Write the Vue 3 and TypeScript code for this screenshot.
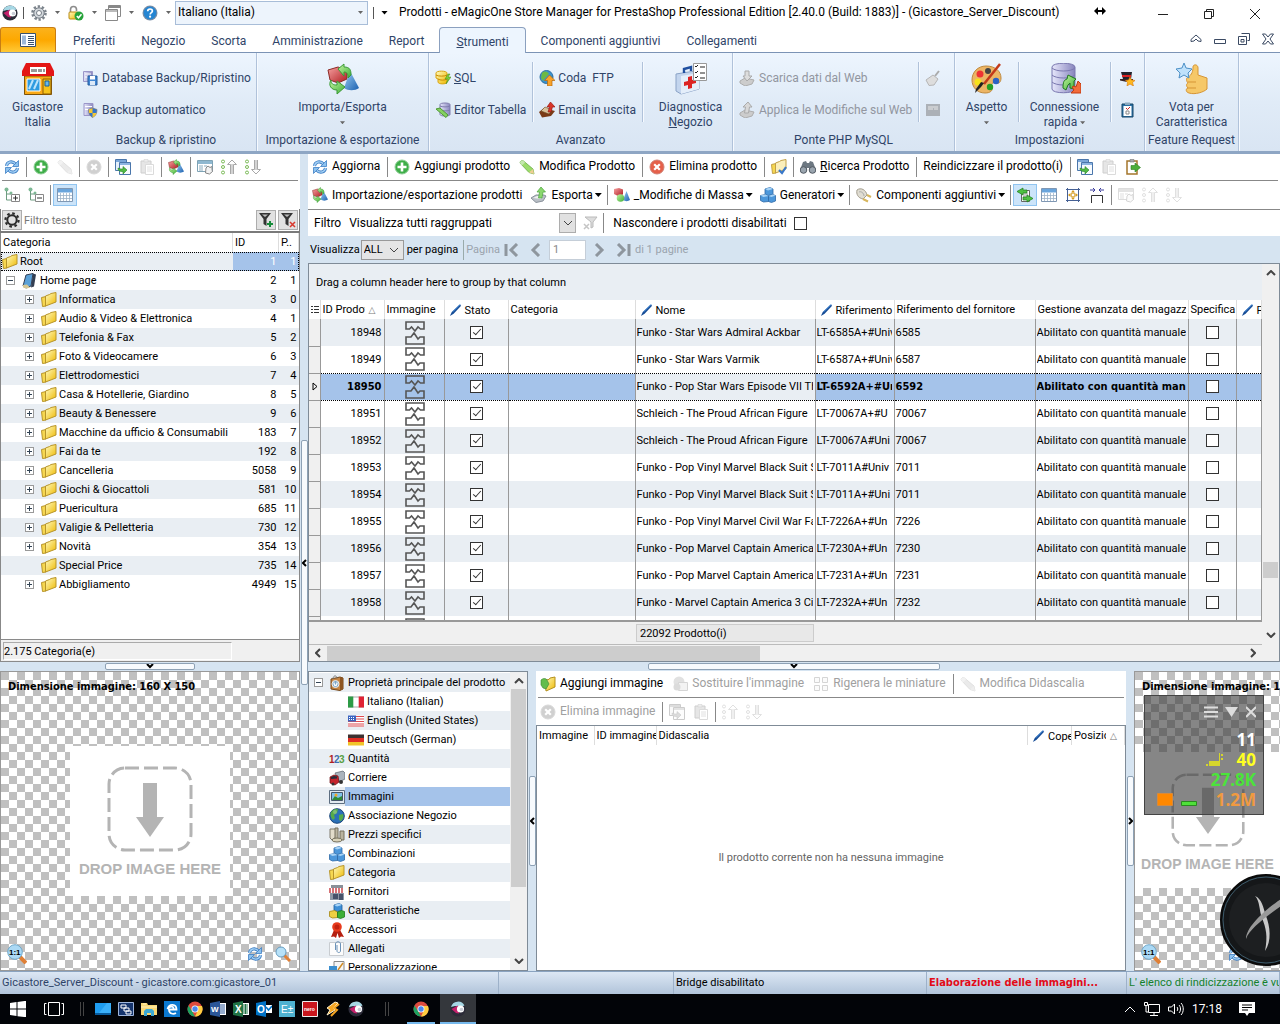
<script setup lang="ts">
import { h, ref } from 'vue'
import type { FunctionalComponent } from 'vue'

type Glyph = [text: string, x: number, y: number, size: number, fill: string, weight: number]
const glyphs: Record<string, Glyph[]> = {
  n123: [['1', 0, 12, 10, '#b01e1e', 700], ['2', 5, 12, 10, '#3f6fae', 700], ['3', 10, 12, 10, '#57a043', 700]],
  mag1: [['1:1', 2, 11, 8, '#000', 700]],
  word: [['W', 1, 11, 8, '#fff', 700]],
  excel: [['X', 2, 12, 10, '#fff', 700]],
  outlook: [['O', 1, 12, 10, '#fff', 700]],
  epm: [['E±', 2, 12, 10, '#fff', 400]],
  nero: [['nero', 2, 10, 5, '#fff', 700]],
}

const Ico: FunctionalComponent<{ n: string; s?: number }> = (p) =>
  h('svg', { class: 'ico', width: p.s ?? 16, height: p.s ?? 16, 'aria-hidden': 'true' }, [
    h('use', { href: '#' + p.n }),
    ...(glyphs[p.n] ?? []).map((g) => h('text', { x: g[1], y: g[2], 'font-size': g[3], fill: g[4], 'font-weight': g[5], 'font-family': 'Liberation Sans, sans-serif' }, g[0])),
  ])
Ico.props = ['n', 's']

interface Tool { icon?: string; text?: string; sep?: boolean; off?: boolean; drop?: boolean; on?: boolean; acc?: boolean }
const sep: Tool = { sep: true }

const tabs = ['Preferiti', 'Negozio', 'Scorta', 'Amministrazione', 'Report', 'Strumenti', 'Componenti aggiuntivi', 'Collegamenti']

const treeTools: Tool[] = [
  { icon: 'refresh' }, sep, { icon: 'add' }, { icon: 'pencil', off: true }, sep, { icon: 'del', off: true }, sep,
  { icon: 'copy' }, { icon: 'paste', off: true }, sep, { icon: 'impexp' }, sep, { icon: 'tconf' }, { icon: 'sup' }, { icon: 'sdown' },
]
const treeTools2: Tool[] = [{ icon: 'tplus' }, { icon: 'tminus' }, sep, { icon: 'tgrid', on: true }]
const prodTools: Tool[] = [
  { icon: 'refresh', text: 'Aggiorna' }, sep, { icon: 'add', text: 'Aggiungi prodotto' }, { icon: 'pencil', text: 'Modifica Prodotto' }, sep,
  { icon: 'del', text: 'Elimina prodotto' }, sep, { icon: 'fcheck' }, sep, { icon: 'binoc', text: 'Ricerca Prodotto', acc: true }, sep,
  { text: 'Reindicizzare il prodotto(i)' }, sep, { icon: 'copy' }, { icon: 'paste', off: true }, { icon: 'pexp' },
]
const prodTools2: Tool[] = [
  { icon: 'impexp', text: 'Importazione/esportazione prodotti' }, { icon: 'exp', text: 'Esporta', drop: true }, sep,
  { icon: 'mass', text: '_Modifiche di Massa', drop: true }, { icon: 'cubes', text: 'Generatori', drop: true }, sep,
  { icon: 'plug', text: 'Componenti aggiuntivi', drop: true }, sep, { icon: 'dswap', on: true }, { icon: 'tgrid' }, { icon: 'fit' }, { icon: 'widths' }, sep,
  { icon: 'tconf', off: true }, { icon: 'sup', off: true }, { icon: 'sdown', off: true },
]
const imgTools: Tool[] = [
  { icon: 'addimg', text: 'Aggiungi immagine' }, { icon: 'replace', text: "Sostituire l'immagine", off: true },
  { icon: 'thumbs', text: 'Rigenera le miniature', off: true }, sep, { icon: 'pencil', text: 'Modifica Didascalia', off: true },
]
const imgTools2: Tool[] = [
  { icon: 'del', text: 'Elimina immagine', off: true }, sep, { icon: 'copy', off: true }, { icon: 'paste', off: true }, sep,
  { icon: 'sup', off: true }, { icon: 'sdown', off: true },
]

const cats: [string, string, string][] = [
  ['Informatica', '3', '0'], ['Audio & Video & Elettronica', '4', '1'], ['Telefonia & Fax', '5', '2'], ['Foto & Videocamere', '6', '3'],
  ['Elettrodomestici', '7', '4'], ['Casa & Hotellerie, Giardino', '8', '5'], ['Beauty & Benessere', '9', '6'],
  ['Macchine da ufficio & Consumabili', '183', '7'], ['Fai da te', '192', '8'], ['Cancelleria', '5058', '9'], ['Giochi & Giocattoli', '581', '10'],
  ['Puericultura', '685', '11'], ['Valigie & Pelletteria', '730', '12'], ['Novità', '354', '13'], ['Special Price', '735', '14'], ['Abbigliamento', '4949', '15'],
]

const rows: [string, string, string, string][] = [
  ['18948', 'Funko - Star Wars Admiral Ackbar', 'LT-6585A+#Univ', '6585'],
  ['18949', 'Funko - Star Wars Varmik', 'LT-6587A+#Univ', '6587'],
  ['18950', 'Funko - Pop Star Wars Episode VII The', 'LT-6592A+#Univ', '6592'],
  ['18951', 'Schleich - The Proud African Figure', 'LT-70067A+#U', '70067'],
  ['18952', 'Schleich - The Proud African Figure', 'LT-70067A#Uni', '70067'],
  ['18953', 'Funko - Pop Vinyl Marvel Black Suit Sp', 'LT-7011A#Univ', '7011'],
  ['18954', 'Funko - Pop Vinyl Marvel Black Suit Sp', 'LT-7011A+#Uni', '7011'],
  ['18955', 'Funko - Pop Vinyl Marvel Civil War Fal', 'LT-7226A+#Un', '7226'],
  ['18956', 'Funko - Pop Marvel Captain America', 'LT-7230A+#Un', '7230'],
  ['18957', 'Funko - Pop Marvel Captain America', 'LT-7231A+#Un', '7231'],
  ['18958', 'Funko - Marvel Captain America 3 Civil', 'LT-7232A+#Un', '7232'],
  ['', '', '', ''],
]
const current = ref('18950')

const props: [string, string, number][] = [
  ['bag', 'Proprietà principale del prodotto', 0], ['it', 'Italiano (Italian)', 1], ['us', 'English (United States)', 1], ['de', 'Deutsch (German)', 1],
  ['n123', 'Quantità', 0], ['truck', 'Corriere', 0], ['pic', 'Immagini', 0], ['globe', 'Associazione Negozio', 0], ['coins', 'Prezzi specifici', 0],
  ['cubes', 'Combinazioni', 0], ['folder', 'Categoria', 0], ['front', 'Fornitori', 0], ['cubes3', 'Caratteristiche', 0], ['rosette', 'Accessori', 0],
  ['clip', 'Allegati', 0], ['custom', 'Personalizzazione', 0],
]
const selected = ref('Immagini')

const pinned = ['desk', 'remote', 'explorer', 'edge', 'chrome', 'word', 'excel', 'outlook', 'epm', 'nero', 'winamp', 'logo']
const status = ['Gicastore_Server_Discount - gicastore.com:gicastore_01', '', 'Bridge disabilitato', 'Elaborazione delle immagini...', "L' elenco di rindicizzazione è vuoto"]
</script>

<template>
  <div class="app">
    <svg class="sprite" aria-hidden="true">
      <defs>
        <linearGradient id="gy" x1="0" y1="0" x2="1" y2="1"><stop offset="0" stop-color="#fffbc0" /><stop offset="1" stop-color="#eeb800" /></linearGradient>
        <linearGradient id="gb" x1="0" y1="0" x2="1" y2="1"><stop offset="0" stop-color="#9fd0f5" /><stop offset="1" stop-color="#1c61b0" /></linearGradient>
        <linearGradient id="gg" x1="0" y1="0" x2="1" y2="1"><stop offset="0" stop-color="#c5f5a2" /><stop offset="1" stop-color="#3cae35" /></linearGradient>
        <linearGradient id="gr" x1="0" y1="0" x2="1" y2="1"><stop offset="0" stop-color="#f5a0a0" /><stop offset="1" stop-color="#b01c20" /></linearGradient>
        <linearGradient id="gv" x1="0" y1="0" x2="1" y2="0"><stop offset="0" stop-color="#e6e6fb" /><stop offset="1" stop-color="#8785bd" /></linearGradient>
      </defs>
      <symbol id="logo" viewBox="0 0 16 16"><circle cx="8" cy="8" r="7.600" fill="#2b2b38" /><path d="M1 6a7.300 7.300 0 0 1 13.500-1.500L10 6 5 5z" fill="#a6d7e4" /><path d="M1.500 8 8 4.500 9 12.500 6 12z" fill="#c5216c" /><circle cx="10.500" cy="8" r="3.600" fill="#fff" /><circle cx="11.500" cy="8.500" r="1.800" fill="#c9ccd6" /></symbol>
      <symbol id="gear" viewBox="0 0 16 16"><circle cx="8" cy="8" r="6.500" fill="none" stroke="#7c848c" stroke-width="2.600" stroke-dasharray="2.300 1.780" /><circle cx="8" cy="8" r="5.200" fill="#d3d8dc" stroke="#767e87" /><circle cx="8" cy="8" r="2.500" fill="#fff" stroke="#767e87" /></symbol>
      <symbol id="lock" viewBox="0 0 16 16"><path d="M2.500 8V4.500a3 3 0 0 1 6 0V6" fill="none" stroke="#8c8c8c" stroke-width="1.600" /><rect x="1" y="7" width="9" height="7" rx="1" fill="url(#gy)" stroke="#b98a14" /><circle cx="11" cy="11" r="4.500" fill="#26a33a" /><path d="m8.800 11 1.700 1.800 3-3.500" fill="none" stroke="#fff" stroke-width="1.500" /></symbol>
      <symbol id="win" viewBox="0 0 16 16"><path d="M3.500.500h12v11h-12z" fill="#fff" stroke="#888" /><path d="M3 1h12v2H3z" fill="#888" /><path d="M.500 4.500h12v11H.500z" fill="#fff" stroke="#888" /><path d="M1 5h11v2H1z" fill="#bbb" /></symbol>
      <symbol id="help" viewBox="0 0 16 16"><circle cx="8" cy="8" r="7.500" fill="#7c8ea4" /><circle cx="8" cy="8" r="6.400" fill="#2585d2" /><path d="M5.700 6.300c0-3 4.700-3 4.700-.300 0 1.700-2.200 1.700-2.200 3.500" fill="none" stroke="#fff" stroke-width="1.700" /><circle cx="8.100" cy="11.700" r="1.100" fill="#fff" /></symbol>
      <symbol id="shop" viewBox="0 0 32 32"><path d="M2.500 13h27v18.500h-27z" fill="#f9a916" stroke="#7d5309" /><path d="M4 0h24l4 8v5H0V8z" fill="#e31616" /><path d="M8 4h16v7H8z" fill="#fff" /><path d="M10 6v3M12 6v3M14 6v3M17 6v3M19 6v3M22 6v3" stroke="#333" /><path d="M5 16h13v12H5z" fill="#2d9be0" stroke="#fff" /><path d="m7 26 4-9M12 26l4-9" stroke="#bde4fb" stroke-width="2" /><path d="M21 16h8v15h-8z" fill="#f6c31b" stroke="#8d5d06" /><path d="M23 18h4v5h-4z" fill="#68b9ec" stroke="#1b5f96" /></symbol>
      <symbol id="dbsave" viewBox="0 0 16 16"><path d="M1.500 1.500h9v10h-9z" fill="url(#gv)" stroke="#9a96c8" /><path d="M3 4h6M3 7h6" stroke="#fff" /><path d="M6 6h9v9H6z" fill="#3f86d3" stroke="#245c9f" /><path d="M8 6h5v3.500H8z" fill="#fff" /><path d="M8 11h5v4H8z" fill="#dce9f8" /></symbol>
      <symbol id="dbshield" viewBox="0 0 16 16"><path d="M2 1.500h9v12H2z" fill="url(#gv)" stroke="#9a96c8" /><path d="M3 4.500h7M3 7.500h7" stroke="#fff" /><path d="M10.500 6 15 7.500c0 4-1.500 6.500-4.500 8C8 14 6.500 11.500 6.500 7.500z" fill="#3377cf" stroke="#777" stroke-width=".7" /><path d="M10.500 11h4c-.8 2-2 3.500-4 4.500zM6.800 7.500l3.700-1.200V11H7.100z" fill="#f5c831" /></symbol>
      <symbol id="impexp" viewBox="0 0 32 32"><path d="m1 7 10-3 9 3v9L11 20 3 17z" fill="url(#gr)" stroke="#8c2b27" /><path d="m23 8 9 17c-4 3-11 3-15 0z" fill="url(#gb)" /><path d="M11 6 17 1v3c6 0 7 3 7 8l-3 3c0-4-1-6-4-6v4z" fill="url(#gg)" stroke="#3b9a36" /><path d="M4 17c0 4 2 5 6 5v-4l8 6-8 7v-4C4 27 1 22 4 17z" fill="url(#gg)" stroke="#3b9a36" /></symbol>
      <symbol id="sql" viewBox="0 0 16 16"><path d="M1 3c0-2.500 11-2.500 11 0v9c0 2.500-9 2.500-9 0V9L1 8z" fill="url(#gy)" stroke="#d9a410" /><path d="M1 5c2 1.500 9 1.500 11 0M3 9c2 1.500 7 1.500 9 0" fill="none" stroke="#c98a00" /><path d="m13 4-3 5h3l-2 5 5-7h-3l2-3z" fill="#7fcf3a" stroke="#3f8617" stroke-width=".5" /></symbol>
      <symbol id="tabedit" viewBox="0 0 16 16"><path d="M5 2.500c0-2 10-2 10 0v10c0 2-10 2-10 0z" fill="url(#gv)" stroke="#7f7cac" /><path d="M5 4c2 1.200 8 1.200 10 0M5 8c2 1.200 8 1.200 10 0" stroke="#7f7cac" fill="none" /><path d="m1 7 4-1 8 7-2 2.500z" fill="#85d162" stroke="#4f9a33" /></symbol>
      <symbol id="ftp" viewBox="0 0 16 16"><circle cx="7.500" cy="7" r="6.500" fill="#3b93d0" stroke="#2a6ea0" /><path d="M3 3c3-3 6-1 7 1L7 7 4 11 2 8z" fill="#6cb944" /><path d="M10.500 5 16 10.500h-3V16H8.500v-5.500H5.500z" fill="#f9a32a" stroke="#b4690b" stroke-width=".7" /></symbol>
      <symbol id="email" viewBox="0 0 16 16"><path d="m0 10 5-4 11 3-4 5-9 1.500z" fill="#7a3b16" /><path d="m2 9 4-4 7 3-3 4z" fill="#d9c29b" stroke="#6b4a20" stroke-width=".6" /><path d="M11.500 0 16 5h-2.500l-1.500 5H9l1.500-5H8z" fill="#d8352a" stroke="#8a130c" stroke-width=".6" /></symbol>
      <symbol id="diag" viewBox="0 0 32 32"><path d="m1 11 19-3 4 2v16L6 31l-5-3z" fill="#c3d5ee" stroke="#8ba3c6" /><path d="m6 13 18-3v16L6 31z" fill="#e4eefa" /><path d="M9 10V6l7-2v4" fill="none" stroke="#1f4fa0" stroke-width="2.400" /><path d="m13 14 4-1v4l4-1v4l-4 1v4l-4 1v-4l-4 1v-4l4-1z" fill="#dc2323" /><path d="M18.500.500h13v17h-13z" fill="#fff" stroke="#999" /><path d="m20 3 1 1 2-2m-3 7 1 1 2-2m-3 6 1 1 2-2M25 4h5m-5 6h5m-5 5h5" stroke="#222" fill="none" /></symbol>
      <symbol id="dl" viewBox="0 0 16 16"><path d="m1 11 5-3 9 2-2 4-7 2-5-3z" fill="#ccc" stroke="#adadad" /><path d="M6 1h4v5h3l-5 5-4-5h2z" fill="#ddd" stroke="#aaa" /></symbol>
      <symbol id="ul" viewBox="0 0 16 16"><path d="m1 11 5-3 9 2-2 4-7 2-5-3z" fill="#ccc" stroke="#adadad" /><path d="m9 0 4 5h-2.500l-1 6h-4l1-6H4z" fill="#d8d8d8" stroke="#aaa" /></symbol>
      <symbol id="broom" viewBox="0 0 16 16"><path d="m14 1-4 5" stroke="#aaa" stroke-width="2" /><path d="m1 10 7-5 5 4-4 6-5 .500z" fill="#ddd" stroke="#b5b5b5" /></symbol>
      <symbol id="panel" viewBox="0 0 16 16"><path d="M1 2h14v12H1z" fill="#acb1b7" /><path d="M3 5h10M3 7h5M9 7h4" stroke="#e9e9e9" /></symbol>
      <symbol id="palette" viewBox="0 0 32 32"><path d="M15 3c9 0 15 5 15 12 0 4-2 6-5 5-4-1-5 1-4 4 1 4-2 6-7 6C6 30 1 24 1 17 1 9 7 3 15 3z" fill="#ecb565" stroke="#c08a3e" /><circle cx="9" cy="11" r="3.500" fill="#e33" /><circle cx="17" cy="8" r="3" fill="#444" /><circle cx="7" cy="19" r="3.500" fill="#f6e21a" /><circle cx="25" cy="18" r="3.200" fill="#2b62c4" /><circle cx="19" cy="24" r="3.200" fill="#27a025" /><path d="M29 1 13 21" stroke="#c33a1a" stroke-width="2.500" /><path d="m13 20-3 4-6 6 1-4 5-7z" fill="#222" /></symbol>
      <symbol id="dbconn" viewBox="0 0 32 32"><path d="M3 4C3-1 26-1 26 4v22c0 5-23 5-23 0z" fill="url(#gv)" stroke="#7b79b0" /><path d="M3 5c4 4 19 4 23 0M3 12c4 4 19 4 23 0M3 19c4 4 19 4 23 0" fill="none" stroke="#7b79b0" /><path d="m19 12 8 4-2 2v8l-4-1v-5l-2 2-2 5-3-2c0-6 1-8 4-9z" fill="url(#gg)" stroke="#1f7a1d" /><path d="m29 18 3 3v9H22l3-3-2-3 2-1 2 1z" fill="#f26b3a" stroke="#c33a10" /></symbol>
      <symbol id="hat" viewBox="0 0 16 16"><path d="M2 2h11l-1 7H4z" fill="#24242c" /><path d="M3 5h9v2H3z" fill="#d22" /><path d="M1 9h13v1.500L8 12 1 10.500z" fill="#3a2626" /><path d="m11 7 1.500 3 3.500.500-2.500 2 1 3.500-3.500-2-3 2 .5-3.500-2-2L9.500 10z" fill="#ffb91f" stroke="#d9750b" stroke-width=".6" /></symbol>
      <symbol id="clipb" viewBox="0 0 16 16"><path d="M3 2h11v13H3z" fill="#2a71a5" stroke="#164766" /><path d="M4.500 4h8v10h-8z" fill="#fff" /><path d="M6 .500h5V3H6z" fill="#8dabc0" /><path d="M7 9h3v3H7z" fill="none" stroke="#888" /><path d="m7 6 1.500 1.500L11 5" fill="none" stroke="#c22" /></symbol>
      <symbol id="thumb" viewBox="0 0 32 32"><path d="M12 14c4-2 5-6 5-10 0-3 5-3 5 1v7l9 3v11c-3 3-12 6-18 4-4-1-3-5-1-5-2-2-2-4 0-5-2-2-2-5 0-6z" fill="#f6c868" stroke="#d69535" /><path d="M12 19h8M11 25h9" stroke="#d69535" /><path d="m8 0 2 5 6 1-4 4 1 5-5-3-5 3 1-5-4-4 6-1z" fill="#bfe1fb" stroke="#4d90c6" /></symbol>
      <symbol id="refresh" viewBox="0 0 16 16"><path d="M2.500 7C3 2.500 8.500 1.500 11.500 5M13.500 9c-.5 4.500-6 5.500-9 2" fill="none" stroke="#3f7fc4" stroke-width="3" /><path d="M2.500 7C3 2.500 8.500 1.500 11.500 5M13.500 9c-.5 4.500-6 5.500-9 2" fill="none" stroke="#a3d0f5" stroke-width="1.400" /><path d="M14.500 1.500v6h-6zM1.500 14.500v-6h6z" fill="#8cc2f0" stroke="#3f7fc4" stroke-width=".8" /></symbol>
      <symbol id="add" viewBox="0 0 16 16"><circle cx="8" cy="8" r="7" fill="#3fae49" stroke="#8fcf96" /><path d="M6.700 3.500h2.600v3.200h3.200v2.600H9.300v3.200H6.700V9.300H3.500V6.700h3.200z" fill="#fff" /></symbol>
      <symbol id="pencil" viewBox="0 0 16 16"><path d="M1 4c0-2 2-3 3.500-2L14 10l1 5-5-1.500z" fill="#9bdc6a" stroke="#69ad45" stroke-width=".8" /><path d="M1 4c0-2 2-3 3.500-2l1.500 1.500-3 3z" fill="#c5e8ae" /><path d="m10 13.500 4-3.500 1 5z" fill="#efce94" /></symbol>
      <symbol id="del" viewBox="0 0 16 16"><circle cx="8" cy="8" r="7" fill="#e5604a" stroke="#d08074" /><path d="m5.200 5.200 5.600 5.600m0-5.600-5.600 5.600" stroke="#fff" stroke-width="2.200" /></symbol>
      <symbol id="copy" viewBox="0 0 16 16"><path d="M.500.500h11v11H.500z" fill="#e5f0fb" stroke="#4a76ab" /><path d="M1 1h10v2H1z" fill="#7aa6d8" /><path d="M4.500 3.500h11v12h-11z" fill="#f7fbff" stroke="#4a76ab" /><path d="M5 4h10v2H5z" fill="#8db5e2" /><path d="M3 9c0 3 2 3.500 5 3.500V15l4-4-4-3.500V10c-2 0-3 0-5-1z" fill="#52bb46" stroke="#258524" stroke-width=".6" /></symbol>
      <symbol id="paste" viewBox="0 0 16 16"><path d="M2 2h10v12H2z" fill="#d9b778" stroke="#987136" /><path d="M5 .500h4V3H5z" fill="#ccc" stroke="#888" stroke-width=".6" /><path d="M6.500 5.500h8v10h-8z" fill="#fff" stroke="#999" /><path d="M8 8h5M8 10h5M8 12h5" stroke="#aaa" /></symbol>
      <symbol id="pexp" viewBox="0 0 16 16"><path d="M2 2h10v13H2z" fill="#fff" stroke="#a4752b" stroke-width="1.500" /><path d="M5 .500h4V3H5z" fill="#aaa" stroke="#777" stroke-width=".6" /><path d="M6 6.500h4V4l5.500 4.500L10 13v-2.500H6z" fill="#4cae3a" stroke="#2d7f21" stroke-width=".6" /></symbol>
      <symbol id="tconf" viewBox="0 0 16 16"><path d="M.500 1.500h15v11H.500z" fill="#fff" stroke="#7fa3b5" /><path d="M1 2h14v3H1z" fill="#8fb8d0" /><path d="M2 7h4M2 9h4M7 7h3M2 11h4" stroke="#8aabbd" /><path d="m11 7 2 1.500 2-1v3l.5 2-3 2.500-4-1 .5-5z" fill="#f3f3f3" stroke="#888" /></symbol>
      <symbol id="sup" viewBox="0 0 16 16"><g fill="#fff" stroke="#79b955"><circle cx="2" cy="2.500" r="1.500" /><circle cx="2" cy="8" r="1.500" /><circle cx="2" cy="13.500" r="1.500" /></g><path d="M9.500 15V5.500h-3L11 1l4.500 4.500h-3V15M11 15V5" fill="none" stroke="#a8a8a8" /></symbol>
      <symbol id="sdown" viewBox="0 0 16 16"><g fill="#fff" stroke="#79b955"><circle cx="2" cy="2.500" r="1.500" /><circle cx="2" cy="8" r="1.500" /><circle cx="2" cy="13.500" r="1.500" /></g><path d="M9.500 1v9.500h-3L11 15l4.500-4.500h-3V1M11 1v10" fill="none" stroke="#a8a8a8" /></symbol>
      <symbol id="tplus" viewBox="0 0 16 16"><circle cx="2.500" cy="2.500" r="2" fill="#7cb894" /><path d="M2.500 4v9H7M2.500 7H7" fill="none" stroke="#6d9c80" /><circle cx="7" cy="6" r="1.500" fill="#7cb894" /><path d="M7.500 7.500h8v7h-8z" fill="#fff" stroke="#888" /><path d="M9 11h5M11.500 8.500v5" stroke="#333" /></symbol>
      <symbol id="tminus" viewBox="0 0 16 16"><circle cx="2.500" cy="2.500" r="2" fill="#7cb894" /><path d="M2.500 4v9H7M2.500 7H7" fill="none" stroke="#6d9c80" /><circle cx="7" cy="6" r="1.500" fill="#7cb894" /><path d="M7.500 7.500h8v7h-8z" fill="#fff" stroke="#888" /><path d="M9 11h5" stroke="#333" /></symbol>
      <symbol id="tgrid" viewBox="0 0 16 16"><path d="M.500 1.500h15v13H.500z" fill="#fff" stroke="#7f97b3" /><path d="M1 2h14v3.500H1z" fill="#6aa5dc" /><path d="M1 8.500h14M1 11.500h14M3.500 6v8M6.500 6v8M9.500 6v8M12.500 6v8" stroke="#9db2c8" stroke-width=".8" /></symbol>
      <symbol id="fadd" viewBox="0 0 16 16"><path d="M1 1h12L8.500 7v7l-3-2V7z" fill="#333" /><path d="M4 2.500h6L7 5z" fill="#bbb" /><path d="M12 9v6M9 12h6" stroke="#168c3a" stroke-width="2" /></symbol>
      <symbol id="fdel" viewBox="0 0 16 16"><path d="M1 1h12L8.500 7v7l-3-2V7z" fill="#333" /><path d="M4 2.500h6L7 5z" fill="#bbb" /><path d="m10 10 5 5m0-5-5 5" stroke="#d8372c" stroke-width="1.500" /></symbol>
      <symbol id="fgrey" viewBox="0 0 16 16"><path d="M3 2h12l-4 5v5l-2 1V7z" fill="#ddd" stroke="#bbb" /><path d="m2 9 5 5m0-5-5 5" stroke="#c5c5c5" stroke-width="1.500" /></symbol>
      <symbol id="cog" viewBox="0 0 16 16"><circle cx="8" cy="8" r="6.600" fill="none" stroke="#2b2b2b" stroke-width="2.200" stroke-dasharray="2.600 2.580" /><circle cx="8" cy="8" r="4.700" fill="none" stroke="#2b2b2b" stroke-width="2" /></symbol>
      <symbol id="folder" viewBox="0 0 16 16"><path d="M.500 5.500 5 4.500v9.500l-3.500.500z" fill="#f6d750" stroke="#b8952a" /><path d="m4.500 4 4-1.500L10 1.500l5-1v9.500L4.500 14z" fill="url(#gy)" stroke="#b8952a" /></symbol>
      <symbol id="fcheck" viewBox="0 0 16 16"><path d="M.500 5.500 5 4.500v9.500l-3.500.500z" fill="#f6d750" stroke="#c2a047" /><path d="m4.500 4 4-1.500L10 1.500l5-1v9.500L4.500 14z" fill="#fbefbb" stroke="#c2a047" /><path d="m8 11 3 3 4-6" stroke="#3a78c8" stroke-width="2.200" fill="none" /></symbol>
      <symbol id="pc" viewBox="0 0 16 16"><path d="m4 2 7-1.500L9 13l-5 2-3-2z" fill="#5aa1d8" stroke="#333f55" /><path d="m11 .500 3 1-2 12-3 1z" fill="#333e52" /><path d="m1 12 4-.500 3 3-3 1-4-1z" fill="#d6c793" /></symbol>
      <symbol id="binoc" viewBox="0 0 16 16"><path d="M3 3 6 2l1 2h2l1-2 3 1 3 8H9V9H7v2H0z" fill="#6d7882" /><circle cx="3.500" cy="11" r="3.300" fill="#9aa5af" stroke="#525a63" /><circle cx="12.500" cy="11" r="3.300" fill="#9aa5af" stroke="#525a63" /></symbol>
      <symbol id="exp" viewBox="0 0 16 16"><path d="m0 11 5-3h8l2 1-3 5-7 1.500z" fill="#b9bfc6" stroke="#8a929b" /><path d="m2 11 4-2h6l-2 3z" fill="#eee" /><path d="m10 0 4.500 5H12l-1 6H7.500l1-6H6z" fill="#8ad76d" stroke="#4ba33e" stroke-width=".7" /></symbol>
      <symbol id="mass" viewBox="0 0 16 16"><path d="m0 2 5-1 4 1.500v5L4 9 0 7z" fill="url(#gr)" /><path d="m12.500 4 3.500 9c-2 1.500-5 1.500-7 0z" fill="url(#gb)" /><circle cx="6.500" cy="11" r="3.800" fill="url(#gg)" /></symbol>
      <symbol id="cubes" viewBox="0 0 16 16"><g fill="#4c97da" stroke="#2d68a6" stroke-width=".8"><path d="m5 2 5-1.500 3 1.500v5.500l-5 1L5 7z" /><path d="m.500 8.500 5-1 3 1.500v5.500l-5 .500-3-1.500z" /><path d="m8.500 9 4-1.500 3 1V14l-4 1.500-3-1z" /></g><path d="m5 2 5-1.500L13 2 8 3.500zM.500 8.500l5-1L8.500 9l-5 1zM8.500 9l4-1.500 3 1-4 1.500z" fill="#a8d4f7" /></symbol>
      <symbol id="cubes3" viewBox="0 0 16 16"><path d="m5 2 5-1.500 3 1.500v5.500l-5 1L5 7z" fill="#3f8fd6" stroke="#1d5a9b" stroke-width=".8" /><path d="m.500 8.500 5-1 3 1.500v5.500l-5 .500-3-1.500z" fill="#eecf43" stroke="#a48512" stroke-width=".8" /><path d="m8.500 9 4-1.500 3 1V14l-4 1.500-3-1z" fill="#3cae35" stroke="#1c7a1b" stroke-width=".8" /><path d="m5 2 5-1.500L13 2 8 3.500z" fill="#a8d4f7" /></symbol>
      <symbol id="plug" viewBox="0 0 16 16"><path d="M1 3c4-3 9 0 10 5l-4 4C2 11 0 7 1 3z" fill="#e0ddd2" stroke="#a39d8e" /><path d="M3 5c2-1 5 1 5 4" fill="none" stroke="#aaa" /><path d="m11 8 4 2M7 12l5 2.500" stroke="#d7b65d" stroke-width="2" /></symbol>
      <symbol id="dswap" viewBox="0 0 16 16"><path d="M4.500 3.500h8v11h-8z" fill="#fff" stroke="#666" /><path d="M6 7h5M6 9h5" stroke="#999" /><path d="M6 1v2h4v3H6v2L0 4.500zM10 8v2H6v3h4v2l6-3.500z" fill="#4fc043" stroke="#1d7c1a" stroke-width=".7" /></symbol>
      <symbol id="fit" viewBox="0 0 16 16"><path d="M2.500 1v14M13.500 1v14M1 2.500h14M1 13.500h14" stroke="#456094" /><path d="m8 3 2 2.500H6zM8 13l2-2.500H6zM3 8l2.500-2v4zM13 8l-2.500-2v4z" fill="#d59b1e" /><circle cx="8" cy="8" r="2" fill="#fff" stroke="#d59b1e" /></symbol>
      <symbol id="widths" viewBox="0 0 16 16"><path d="M2.500 16V8.500h11V16" fill="none" stroke="#333" /><path d="M1 3h5M4 1l2 2-2 2M15 3h-5M12 1l-2 2 2 2" fill="none" stroke="#3a3a9c" /></symbol>
      <symbol id="broken" viewBox="0 0 20 24"><g fill="none" stroke="#555" stroke-width="1.600"><path d="M1 1h18v7h-3.500L13 6l-3 4-3.500-4-2 2H1z" /><path d="M1 23h18v-7h-4l-2 2-4-6-3 4H1z" /></g></symbol>
      <symbol id="pen" viewBox="0 0 16 16"><path d="M2 14.500 4 10l8.500-8L14 3.500 6 12z" fill="#164c96" /><path d="m5 10 8-8" stroke="#4b92dd" /></symbol>
      <symbol id="it" viewBox="0 0 16 16"><path d="M0 3h16v10H0z" fill="#fff" stroke="#aaa" /><path d="M0 2.500h5.300v11H0z" fill="#2d9b46" /><path d="M10.700 2.500H16v11h-5.300z" fill="#df2234" /></symbol>
      <symbol id="us" viewBox="0 0 16 16"><path d="M0 2.500h16v11H0z" fill="#fff" /><path d="M0 3.500h16M0 6h16M0 8.500h16M0 11h16M0 13h16" stroke="#dd4a50" stroke-width="1.200" /><path d="M0 2.500h8v6H0z" fill="#3a64c0" /><path d="M1 4.500h6M1 6.500h6" stroke="#fff" stroke-dasharray="1 1" /></symbol>
      <symbol id="de" viewBox="0 0 16 16"><path d="M0 2.500h16v4H0z" fill="#3d3030" /><path d="M0 6h16v4H0z" fill="#e02e24" /><path d="M0 10h16v3.500H0z" fill="#f2c52a" /></symbol>
      <symbol id="bag" viewBox="0 0 16 16"><path d="m2 4 9-2 3 1v11l-3 1.500L2 14z" fill="#c68543" stroke="#754719" /><path d="m11 2 3 1v11l-3 1.500z" fill="#8e5622" /><path d="M4 4c0-4 4-4 4-.500" fill="none" stroke="#777" /><circle cx="6.500" cy="9" r="3.500" fill="#7ba6c8" stroke="#eee" /><path d="M5 7.500c0 4 3 4 3 0" fill="none" stroke="#fff" stroke-width="1.300" /></symbol>
      <symbol id="truck" viewBox="0 0 16 16"><path d="m6 3 8-2 2 2v6l-6 3z" fill="#aab3bd" stroke="#59616b" stroke-width=".7" /><path d="m1 7 4-2 4 1 1 6-4 3-5-2z" fill="#c5242c" stroke="#6a0d11" stroke-width=".7" /><path d="m2 7 3-1 3 .500v2L2 9z" fill="#24303d" /><circle cx="12" cy="12" r="2" fill="#333" /><circle cx="4" cy="14" r="1.500" fill="#333" /></symbol>
      <symbol id="pic" viewBox="0 0 16 16"><path d="M.500 1.500h15v13H.500z" fill="#e3eaf1" stroke="#5d6e81" /><path d="M2.500 3.500h11v8h-11z" fill="#7fc0ea" stroke="#45566a" /><path d="m3 11 3-4 3 2 4-2v4z" fill="#2f8a35" /><circle cx="7" cy="6" r="1.500" fill="#f5a623" /></symbol>
      <symbol id="globe" viewBox="0 0 16 16"><circle cx="8" cy="8" r="7.300" fill="#2b70b8" stroke="#18457a" /><path d="M3 3c2-2 5-2.500 6-1.500L8 5 5 7l1 3-2 2C1 9 1 5 3 3zM10 7l4-1c1 3 0 5-2 7l-2-1z" fill="#56ab48" /><circle cx="6" cy="4" r="2" fill="#fff" opacity=".25" /></symbol>
      <symbol id="coins" viewBox="0 0 16 16"><path d="M1 2h6v8l-4 3-2-2z" fill="#e2dccb" stroke="#7f7a6c" /><path d="M6 1h3v12H6zM11 4h4v9h-4z" fill="#b9b39f" stroke="#76715f" /><ellipse cx="8" cy="13" rx="5" ry="2" fill="#d9d2b8" stroke="#76715f" /></symbol>
      <symbol id="front" viewBox="0 0 16 16"><path d="M2 1h12v4H2z" fill="#8a9098" /><path d="M1 8h14v8H1z" fill="#8d97a5" /><path d="M4 10h5v5H4zM10 10h4v6h-4z" fill="#46526a" /><path d="M0 4h16v5H0z" fill="#fff" /><path d="M1 4v5M4 4v5M7 4v5M10 4v5M13 4v5" stroke="#c9444a" stroke-width="1.500" /></symbol>
      <symbol id="rosette" viewBox="0 0 16 16"><path d="m5 8-3 7 3-.500L7 16l1.500-5L10 16l2-1.500 3 .500-4-7z" fill="#b61f10" /><circle cx="8" cy="5" r="4.800" fill="#e83a1c" /><circle cx="8" cy="5" r="2.500" fill="#c3220f" /></symbol>
      <symbol id="clip" viewBox="0 0 16 16"><path d="M.500 1.500h14v13H.500z" fill="#fcfcfc" stroke="#c8ccd0" /><path d="M8 4v6c0 2 3.500 2 3.500 0V3c0-3-5-3-5 0v6" fill="none" stroke="#6b92b8" /></symbol>
      <symbol id="custom" viewBox="0 0 16 16"><path d="M5 1.500h10v11H5z" fill="#f6f6f6" stroke="#888" /><path d="m14 3-5 7" stroke="#d08a22" stroke-width="1.500" /><path d="M0 6h8v7H0z" fill="#3b8fd0" /></symbol>
      <symbol id="addimg" viewBox="0 0 16 16"><path d="m5 4 4-.5 1-1.500 5-1v10L6 15z" fill="url(#gy)" stroke="#b4901e" /><path d="M1 4c2-2 5-2 6 0l2 4-3 5-3-1-2-3z" fill="#63bd4c" stroke="#3a8530" stroke-width=".6" /></symbol>
      <symbol id="replace" viewBox="0 0 16 16"><circle cx="7" cy="6" r="5.500" fill="#aaa" /><path d="M6.500 6.500h9v8h-9z" fill="#ddd" stroke="#888" /><circle cx="5" cy="11" r="3.500" fill="#999" /></symbol>
      <symbol id="thumbs" viewBox="0 0 16 16"><g fill="#f4f4f4" stroke="#888"><path d="M1.500 1.500h5v5h-5zM9.500 1.500h5v5h-5zM1.500 9.500h5v5h-5zM9.500 9.500h5v5h-5z" /></g></symbol>
      <symbol id="mag" viewBox="0 0 16 16"><path d="m9 9 6 6" stroke="#df8037" stroke-width="3" /><circle cx="6" cy="6" r="5" fill="#b7e1f8" stroke="#669cc0" /></symbol>
      <symbol id="mag1" viewBox="0 0 20 20"><path d="m13 13 6 6" stroke="#df8037" stroke-width="4" /><circle cx="8" cy="8" r="7.300" fill="#abd9f5" stroke="#6fa7c9" /></symbol>
      <symbol id="winlogo" viewBox="0 0 16 16"><path d="m0 2 6.500-1v6.500H0zM7.500.900 16-.200v7.700H7.500zM0 8.500h6.500V15L0 14zM7.500 8.500H16v7.700l-8.500-1z" fill="#fff" /></symbol>
      <symbol id="tview" viewBox="0 0 20 16"><path d="M4.500 1.500h11v13h-11zM2.500 2.500h-2v11h2M17.500 2.500h2v11h-2" fill="none" stroke="#fff" /></symbol>
      <symbol id="desk" viewBox="0 0 16 16"><path d="M0 2h16v12H0z" fill="#1f9df0" /><path d="m4 12 8-10h4v10z" fill="#3bb0fa" /><path d="M0 12h16v2H0z" fill="#075a9c" /></symbol>
      <symbol id="remote" viewBox="0 0 16 16"><path d="M.500 1.500h15v13H.500z" fill="#16356e" stroke="#9fb6dd" /><path d="M3 4h5v3H3zM6 7h5v3H6zM8 10h5v3H8z" fill="#16356e" stroke="#fff" /></symbol>
      <symbol id="explorer" viewBox="0 0 16 16"><path d="M0 2h6l1 2h9v10H0z" fill="#f8d775" /><path d="M2 3h3M0 6h16" stroke="#fff1bd" /><path d="M3 15v-5l2-2h6l2 2v5h-3v-3H6v3z" fill="#3ca9d6" /></symbol>
      <symbol id="edge" viewBox="0 0 16 16"><path d="M0 0h16v16H0z" fill="#0b78d0" /><path d="M12 12c-2.500 1.500-7 1-7-3.500h7.500c0-6-7.500-6-9-.500C5.500 5 10 4.500 9.500 8" fill="none" stroke="#fff" stroke-width="1.800" /></symbol>
      <symbol id="chrome" viewBox="0 0 16 16"><circle cx="8" cy="8" r="7.500" fill="#dd4b3e" /><path d="M1.500 4.500 6 12l-1 3a7.500 7.500 0 0 1-3.500-10.500z" fill="#1da261" /><path d="M8 15.500 11.500 8 10 5h5a7.500 7.500 0 0 1-7 10.500z" fill="#ffcd41" /><path d="M4.500 9.500 8 15.500l-3-.600z" fill="#1da261" /><circle cx="8" cy="8" r="3.500" fill="#fff" /><circle cx="8" cy="8" r="2.700" fill="#4a88ef" /></symbol>
      <symbol id="word" viewBox="0 0 16 16"><path d="M9 2h7v12H9z" fill="#fff" /><path d="M10 4h5M10 6h5M10 8h5M10 10h5M10 12h5" stroke="#2a5699" /><path d="m0 2 10-2v16L0 14z" fill="#2a5699" /></symbol>
      <symbol id="excel" viewBox="0 0 16 16"><path d="M9 2h7v12H9z" fill="#fff" /><path d="M10 4h5M10 6h5M10 8h5M10 10h5M10 12h5M12.500 3v10" stroke="#207245" /><path d="m0 2 10-2v16L0 14z" fill="#207245" /></symbol>
      <symbol id="outlook" viewBox="0 0 16 16"><path d="M9 4h7v8H9z" fill="#fff" /><path d="m10 6 2.500 3L16 5" stroke="#0072c6" fill="none" stroke-width="1.500" /><path d="m0 2 10-2v16L0 14z" fill="#0072c6" /></symbol>
      <symbol id="epm" viewBox="0 0 16 16"><path d="M0 0h16v16H0z" fill="#4fb2d1" /></symbol>
      <symbol id="nero" viewBox="0 0 16 16"><path d="M.500.500h15v15H.500z" fill="#c9161d" stroke="#eee" /></symbol>
      <symbol id="winamp" viewBox="0 0 16 16"><path d="M10 1 2 7l3 2-3 5 8-5-2-2 5-5z" fill="#f6a623" stroke="#fff3d0" /><path d="m14 3-5 4 3 2-6 6" fill="none" stroke="#f6a623" stroke-width="2" /></symbol>
      <symbol id="net" viewBox="0 0 16 16"><path d="M4.500 3.500h11v8h-11zM10 11v3M6 14.500h8M.500 1.500h3v3h-3zM2 5v6h2" fill="none" stroke="#fff" /></symbol>
      <symbol id="vol" viewBox="0 0 16 16"><path d="M.500 6h3l3-3v10l-3-3h-3zM9 6c1 1 1 3 0 4M11 4c2 2 2 6 0 8M13 2c3 3 3 9 0 12" fill="none" stroke="#fff" /></symbol>
      <symbol id="note" viewBox="0 0 16 16"><path d="M0 1h16v11h-6l-2 3-2-3H0z" fill="#fff" /><path d="M3 4h10M3 6.500h10M3 9h6" stroke="#000" /></symbol>
      <symbol id="drop" viewBox="0 0 86 86"><rect x="2" y="2" width="82" height="82" rx="16" fill="none" stroke="#b4b4b4" stroke-width="3" stroke-dasharray="14 5" /><path d="M36 17h14v34h7L43 71 29 51h7z" fill="#b4b4b4" /></symbol>
    </svg>

    <header class="title">
      <Ico n="logo" /><i class="bar" />
      <template v-for="q in ['gear', 'lock', 'win', 'help']" :key="q">
        <button class="quick" :aria-label="q"><Ico :n="q" /><i class="tri" /></button>
      </template>
      <span class="langbox"><select aria-label="Lingua"><option>Italiano (Italia)</option></select><i class="tri" /></span>
      <i class="bar" /><i class="tri dark" />
      <h1>Prodotti - eMagicOne Store Manager for PrestaShop Professional Edition [2.40.0 (Build: 1883)] - (Gicastore_Server_Discount)</h1>
      <svg class="resize" width="12" height="8"><path d="m0 4 4-4v3h4V0l4 4-4 4V5H4v3z" /></svg>
      <div class="winbtns">
        <button aria-label="Riduci"><svg width="12" height="12"><path d="M1 6.500h10" /></svg></button>
        <button aria-label="Ripristina"><svg width="12" height="12"><path d="M1.500 3.500h7v7h-7zM3.500 3V1.500h7v7H9" /></svg></button>
        <button aria-label="Chiudi"><svg width="12" height="12"><path d="m1 1 10 10M11 1 1 11" /></svg></button>
      </div>
    </header>

    <nav class="tabs">
      <button class="file" aria-label="File"><svg width="16" height="14"><path d="M.500.500h15v13H.500z" fill="#fff" stroke="#39516e" /><path d="M2 2.500h4v9H2z" fill="#9db8d8" /><path d="M8 3.500h6M8 5.500h6M8 7.500h6M8 9.500h6M8 11.500h6" stroke="#39516e" /></svg></button>
      <button v-for="t in tabs" :key="t" class="tab" :class="{ active: t === 'Strumenti' }"><span :class="{ acc: t === 'Strumenti' }">{{ t }}</span></button>
      <div class="mdi">
        <svg width="12" height="10"><path d="M1 5.500 6 1l5 4.500v2L8 7 6 5 4 7 1 7.500z" /></svg>
        <svg width="12" height="10"><path d="M.500 5.500h11v4H.500z" /></svg>
        <svg width="12" height="12"><path d="M3.500.500h8v7h-2M.500 3.500h8v8h-8zM3 6.500h3v2.500H3z" /></svg>
        <svg width="12" height="12"><path d="m.500 1 3 0L6 4l2.500-3h3L8 6l3.500 5h-3L6 8l-2.500 3h-3L4 6z" /></svg>
      </div>
    </nav>

    <section class="ribbon">
      <div class="group g1"><div class="gbody"><button class="big"><Ico n="shop" :s="32" /><span>Gicastore<br />Italia</span></button></div></div>
      <div class="group g2"><div class="gbody"><div class="stack"><button><Ico n="dbsave" />Database Backup/Ripristino</button><button><Ico n="dbshield" />Backup automatico</button></div></div><p>Backup &amp; ripristino</p></div>
      <div class="group g3"><div class="gbody"><button class="big"><Ico n="impexp" :s="32" /><span>Importa/Esporta<br /><i class="tri" /></span></button></div><p>Importazione &amp; esportazione</p></div>
      <div class="group g4"><div class="gbody">
        <div class="stack"><button><Ico n="sql" /><span class="acc">SQL</span></button><button><Ico n="tabedit" />Editor Tabella</button></div><i class="rs" />
        <div class="stack"><button><Ico n="ftp" />Coda&nbsp; FTP</button><button><Ico n="email" />Email in uscita</button></div><i class="rs" />
        <button class="big"><Ico n="diag" :s="32" /><span>Diagnostica<br /><u>N</u>egozio</span></button>
      </div><p>Avanzato</p></div>
      <div class="group g5"><div class="gbody">
        <div class="stack"><button disabled><Ico n="dl" />Scarica dati dal Web</button><button disabled><Ico n="ul" />Applica le Modifiche sul Web</button></div><i class="rs" />
        <div class="stack"><button disabled aria-label="Pulisci"><Ico n="broom" /></button><button disabled aria-label="Pannello"><Ico n="panel" /></button></div>
      </div><p>Ponte PHP MySQL</p></div>
      <div class="group g6"><div class="gbody">
        <button class="big look"><Ico n="palette" :s="32" /><span>Aspetto<br /><i class="tri" /></span></button><i class="rs" />
        <button class="big"><Ico n="dbconn" :s="32" /><span>Connessione<br />rapida <i class="tri" /></span></button><i class="rs" />
        <div class="stack"><button aria-label="Procedura guidata"><Ico n="hat" /></button><button aria-label="Preferenze"><Ico n="clipb" /></button></div>
      </div><p>Impostazioni</p></div>
      <div class="group g7"><div class="gbody"><button class="big"><Ico n="thumb" :s="32" /><span>Vota per<br />Caratteristica</span></button></div><p>Feature Request</p></div>
    </section>

    <main class="work">
      <aside class="left">
        <section class="treepane">
          <div v-for="(bar, b) in [treeTools, treeTools2]" :key="b" class="tools" role="toolbar">
            <template v-for="(t, i) in bar" :key="i"><i v-if="t.sep" class="tsep" /><button v-else class="tool" :class="{ on: t.on }" :disabled="t.off" :aria-label="t.icon"><Ico :n="t.icon!" /></button></template>
          </div>
          <div class="search">
            <button aria-label="Opzioni filtro"><Ico n="cog" /></button>
            <input type="text" placeholder="Filtro testo" aria-label="Filtro testo" />
            <button aria-label="Aggiungi filtro"><Ico n="fadd" /></button>
            <button aria-label="Rimuovi filtro"><Ico n="fdel" /></button>
          </div>
          <div class="treewrap">
            <table class="tree">
              <colgroup><col /><col class="c46" /><col class="c20" /></colgroup>
              <thead><tr><th>Categoria</th><th>ID</th><th>P..</th></tr></thead>
              <tbody>
                <tr class="root"><td><span class="node"><Ico n="folder" />Root</span></td><td>1</td><td>1</td></tr>
                <tr><td><span class="node lv1"><i class="box minus" /><Ico n="pc" />Home page</span></td><td>2</td><td>1</td></tr>
                <tr v-for="c in cats" :key="c[0]"><td><span class="node lv2"><i class="box" :class="{ none: c[0] === 'Special Price' }" /><Ico n="folder" />{{ c[0] }}</span></td><td>{{ c[1] }}</td><td>{{ c[2] }}</td></tr>
              </tbody>
            </table>
          </div>
          <footer class="count"><span>2.175 Categoria(e)</span></footer>
        </section>
        <div class="hsplit"><i><svg width="8" height="5"><path d="m1 0 3 3 3-3" /></svg></i></div>
        <section class="preview">
          <strong>Dimensione immagine: 160 X 150</strong>
          <div class="dropzone"><svg width="86" height="86"><use href="#drop" /></svg><span>DROP IMAGE HERE</span></div>
          <div class="zooms"><Ico n="mag1" :s="20" /><Ico n="refresh" /><Ico n="mag" /></div>
        </section>
      </aside>

      <div class="vsplit"><i><svg width="5" height="8"><path d="M4 1 1 4l3 3" /></svg></i></div>

      <div class="right">
        <section class="prodpane">
          <div v-for="(bar, b) in [prodTools, prodTools2]" :key="b" class="tools" role="toolbar">
            <template v-for="(t, i) in bar" :key="i"><i v-if="t.sep" class="tsep" /><button v-else class="tool" :class="{ on: t.on, wide: t.text && !t.drop, drop: t.drop }" :disabled="t.off" :aria-label="t.text ?? t.icon"><Ico v-if="t.icon" :n="t.icon" /><span v-if="t.text" :class="{ acc: t.acc }">{{ t.text }}</span><i v-if="t.drop" class="tri dark" /></button></template>
          </div>
          <div class="filter">
            <label for="flt">Filtro</label>
            <span class="combo"><select id="flt"><option>Visualizza tutti raggruppati</option></select><i><svg width="10" height="6"><path d="m1 1 4 4 4-4" /></svg></i></span>
            <Ico n="fgrey" /><i class="tsep" />
            <label for="hide">Nascondere i prodotti disabilitati</label><input id="hide" type="checkbox" />
          </div>
          <div class="pager">
            <label for="pp">Visualizza</label>
            <span class="all"><select id="pp"><option>ALL</option></select><svg width="10" height="6"><path d="m1 1 4 4 4-4" /></svg></span>
            <span>per pagina</span><i class="tsep" /><label for="pg" class="dim">Pagina</label>
            <button aria-label="Prima"><svg width="16" height="14"><path d="M2 1v12M13 1 7 7l6 6" /></svg></button>
            <button aria-label="Precedente"><svg width="16" height="14"><path d="M11 1 5 7l6 6" /></svg></button>
            <input id="pg" type="text" value="1" />
            <button aria-label="Successiva"><svg width="16" height="14"><path d="m5 1 6 6-6 6" /></svg></button>
            <button aria-label="Ultima"><svg width="16" height="14"><path d="M14 1v12M3 1l6 6-6 6" /></svg></button>
            <span class="dim">di 1 pagine</span>
          </div>
          <div class="grid">
            <div class="gmain">
              <div class="groupby">Drag a column header here to group by that column</div>
              <div class="gscroll">
                <table class="products">
                  <colgroup><col class="k0" /><col class="k1" /><col class="k2" /><col class="k1" /><col class="k4" /><col class="k5" /><col class="k6" /><col class="k7" /><col class="k8" /><col class="k9" /><col /></colgroup>
                  <thead><tr>
                    <th aria-label="Indicatore"><svg width="9" height="10"><path d="M0 1.500h2M3 1.500h5M0 4.500h2M3 4.500h5M0 7.500h2M3 7.500h5" stroke="#333" /></svg></th>
                    <th><span class="sort">ID Prodotto</span><b>△</b></th><th>Immagine</th><th><Ico n="pen" />Stato</th><th>Categoria</th><th><Ico n="pen" />Nome</th>
                    <th><Ico n="pen" />Riferimento</th><th>Riferimento del fornitore</th><th><span class="cell">Gestione avanzata del magazzino</span></th><th>Specifica</th><th><Ico n="pen" />Prezzo</th>
                  </tr></thead>
                  <tbody>
                    <tr v-for="r in rows" :key="r[0]" :class="{ cur: r[0] === current }" @click="current = r[0]">
                      <td><svg v-if="r[0] === current" width="6" height="9"><path d="m1 1 4 3.500L1 8z" fill="none" stroke="#000" /></svg></td>
                      <td>{{ r[0] }}</td><td><svg width="20" height="24"><use href="#broken" /></svg></td>
                      <td><input type="checkbox" checked aria-label="Stato" /></td><td></td>
                      <td><span class="cell">{{ r[1] }}</span></td><td><span class="cell">{{ r[2] }}</span></td><td>{{ r[3] }}</td>
                      <td><span class="cell">{{ r[0] ? 'Abilitato con quantità manuale' : '' }}</span></td><td><input type="checkbox" aria-label="Specifica" /></td><td></td>
                    </tr>
                  </tbody>
                </table>
              </div>
              <div class="gfoot"><i /><span>22092 Prodotto(i)</span></div>
            </div>
            <div class="vbar"><svg width="10" height="6"><path d="m1 5 4-4 4 4" /></svg><i /><svg width="10" height="6"><path d="m1 1 4 4 4-4" /></svg></div>
            <div class="hbar"><svg width="6" height="10"><path d="M5 1 1 5l4 4" /></svg><i /><svg width="6" height="10"><path d="m1 1 4 4-4 4" /></svg></div>
          </div>
        </section>

        <div class="hsplit"><i><svg width="8" height="5"><path d="m1 0 3 3 3-3" /></svg></i></div>

        <div class="lower">
          <section class="props">
            <ul>
              <li v-for="p in props" :key="p[1]" :class="{ sub: p[2], sel: p[1] === selected }" @click="selected = p[1]">
                <i v-if="p[0] === 'bag'" class="box minus" /><Ico :n="p[0]" /><span>{{ p[1] }}</span>
              </li>
            </ul>
            <div class="vbar"><svg width="10" height="6"><path d="m1 5 4-4 4 4" /></svg><i /><svg width="10" height="6"><path d="m1 1 4 4 4-4" /></svg></div>
          </section>
          <div class="vsplit"><i><svg width="5" height="8"><path d="M4 1 1 4l3 3" /></svg></i></div>
          <section class="images">
            <div v-for="(bar, b) in [imgTools, imgTools2]" :key="b" class="tools" role="toolbar">
              <template v-for="(t, i) in bar" :key="i"><i v-if="t.sep" class="tsep" /><button v-else class="tool" :class="{ wide: t.text }" :disabled="t.off" :aria-label="t.text ?? t.icon"><Ico v-if="t.icon" :n="t.icon" /><span v-if="t.text">{{ t.text }}</span></button></template>
            </div>
            <div class="imggrid">
              <table><colgroup><col class="m1" /><col class="m2" /><col /><col class="m4" /><col class="m5" /></colgroup>
                <thead><tr><th>Immagine</th><th>ID immagine</th><th>Didascalia</th><th><Ico n="pen" />Copertina</th><th><span class="sort">Posizione</span><b>△</b></th></tr></thead></table>
              <p>Il prodotto corrente non ha nessuna immagine</p>
            </div>
          </section>
          <div class="vsplit"><i><svg width="5" height="8"><path d="m1 1 3 3-3 3" /></svg></i></div>
          <section class="preview second">
            <strong>Dimensione immagine: 160 X 150</strong>
            <div class="dropzone"><svg width="74" height="76" viewBox="0 0 86 86"><use href="#drop" width="86" height="86" /></svg><span>DROP IMAGE HERE</span></div>
            <div class="zooms"><Ico n="mag1" :s="20" /><Ico n="refresh" /></div>
            <div class="meter">
              <svg width="42" height="12"><path d="M0 1.500h14M0 6h14M0 10.500h14" stroke="#ddd" stroke-width="2" /><path d="M21 1h13l-6.500 10z" fill="#ddd" /></svg>
              <svg width="10" height="12"><path d="m0 1 10 10M10 1 0 11" stroke="#ddd" stroke-width="2" /></svg>
              <b class="w">11</b>
              <b class="y"><svg width="17" height="14"><path d="M0 11h2v2H0zM3 8h10V0h1v13H3zM15 1h2v2h-2zM15 5h2v2h-2z" fill="#d5d52c" /></svg>40</b>
              <b class="g">27.8K</b>
              <b class="o"><svg width="42" height="14"><path d="M.500.500h15v12H.500z" fill="#f80" stroke="#d98a3a" /><path d="M24.500 8.500h15v4h-15z" fill="#4fe03a" stroke="#2a8a20" /></svg>1.2M</b>
            </div>
            <div class="orb"><svg width="92" height="92"><circle cx="46" cy="46" r="45" fill="#151719" stroke="#0a0a0a" stroke-width="2" /><circle cx="46" cy="46" r="43" fill="none" stroke="#3c5a6a" /><circle cx="46" cy="46" r="37" fill="#1d1f21" /><path d="M35 22c5 5 4 14 7 22 4 10 6 18 3 33 7-10 5-25 1-35-3-9-4-17-11-20z" fill="#c9c9c9" /><path d="M66 22C55 28 26 50 26 65c4-12 28-28 41-37z" fill="#999" /></svg></div>
          </section>
        </div>
      </div>
    </main>

    <footer class="status"><span v-for="(s, i) in status" :key="i">{{ s }}</span></footer>

    <footer class="taskbar">
      <button aria-label="Start"><Ico n="winlogo" /></button>
      <button aria-label="Visualizzazione attività" class="tv"><svg width="20" height="16"><use href="#tview" /></svg></button><i class="grip" />
      <button v-for="p in pinned" :key="p" :aria-label="p" class="pin"><Ico :n="p" /></button>
      <i class="grip far" />
      <button class="open" aria-label="Chrome"><Ico n="chrome" /></button><button class="open cur" aria-label="Store Manager"><Ico n="logo" /></button>
      <div class="tray"><svg width="12" height="8"><path d="m1 7 5-5 5 5" fill="none" stroke="#fff" /></svg><Ico n="net" /><Ico n="vol" /><time>17:18</time><Ico n="note" /></div>
    </footer>
  </div>
</template>

<style>
body { margin: 0; overflow: hidden; }
</style>

<style scoped>
.app { display: flex; flex-direction: column; height: 100vh; font: 12px/15px Roboto, "Open Sans", sans-serif; color: #000; background: #fff; overflow: hidden; }
.app *, .app *::before, .app *::after { box-sizing: border-box; }
button, input, select { font: inherit; color: inherit; border: 0; padding: 0; margin: 0; background: none; border-radius: 0; }
button { display: flex; align-items: center; }
svg { flex: none; display: block; }
i { display: block; flex: none; font-style: normal; }
select { appearance: none; outline: 0; }
.sprite { position: absolute; width: 0; height: 0; }
.tri { width: 5px; height: 3px; background: #666; clip-path: polygon(0 0, 100% 0, 50% 100%); }
.tri.dark { width: 7px; height: 4px; background: #000; }
.acc { display: block; }
.acc::first-letter { text-decoration: underline; }

.title { display: flex; align-items: center; height: 25px; padding-left: 2px; flex: none; }
.bar { width: 1px; height: 12px; background: #555; margin: 0 3px 0 5px; }
.quick { width: 37px; gap: 8px; padding-left: 4px; }
.langbox { display: flex; align-items: center; width: 193px; height: 24px; border: 1px solid #a8bdd8; background: #edf4fc; padding-right: 4px; }
.langbox select { flex: 1; height: 20px; padding-left: 2px; }
.title > .dark { margin: 0 11px 0 4px; }
.title h1 { font: inherit; margin: 0; white-space: nowrap; }
.resize { margin: -4px auto 0 35px; }
.winbtns { display: flex; padding-top: 3px; }
.winbtns button { width: 46px; justify-content: center; height: 25px; }
.winbtns button:last-child { margin-right: 2px; }
.winbtns path { fill: none; stroke: #222; }

.tabs { display: flex; align-items: flex-end; height: 28px; border-bottom: 1px solid #7b93b5; color: #2f4468; flex: none; padding-right: 6px; }
.file { width: 56px; height: 25px; justify-content: center; background: linear-gradient(#fbb21c, #fda800 50%, #ffc936); border: 1px solid #c87d13; border-bottom: 0; border-radius: 3px 3px 0 0; margin-right: 4px; }
.tab { height: 21px; padding: 0 13px; white-space: nowrap; }
.tab.active { height: 26px; padding: 4px 16px 0; margin: 0 2px -1px; border: 1px solid #8ba0bf; border-bottom: 0; border-radius: 4px 4px 0 0; background: #edf5fe; }
.mdi { margin-left: auto; display: flex; align-items: center; gap: 12px; height: 26px; }
.mdi path { fill: #fff; stroke: #3b4a63; }

.ribbon { display: flex; flex: none; height: 101px; background: linear-gradient(#edf5fe, #e0ebf7 50%, #d9e5f3); border-bottom: 3px solid #8ea6c4; color: #2f4468; }
.group { display: flex; flex-direction: column; border-right: 1px solid #b0c2da; box-shadow: 1px 0 #f6faff; }
.group p { margin: 0; height: 18px; text-align: center; white-space: nowrap; }
.gbody { display: flex; flex: 1; justify-content: center; align-items: flex-start; }
.g1 { width: 76px; } .g2 { width: 181px; } .g3 { width: 172px; } .g4 { width: 304px; } .g5 { width: 222px; } .g6 { width: 190px; } .g7 { width: 94px; }
.g2 .gbody, .g4 .gbody, .g5 .gbody { justify-content: flex-start; padding-left: 6px; }
.big { flex-direction: column; flex: 1; padding-top: 10px; gap: 5px; text-align: center; white-space: nowrap; }
.big .tri { display: inline-block; vertical-align: middle; }
.big.look { flex: 0 0 63px; }
.stack { display: flex; flex-direction: column; gap: 16px; padding-top: 17px; }
.stack button { gap: 4px; height: 16px; white-space: nowrap; }
.stack button:disabled { color: #9296a0; }
.rs { width: 1px; height: 60px; margin: 9px 6px 0; background: #b0c2da; box-shadow: 1px 0 #f6faff; }
.g4 .stack button { gap: 3px; }
.g6 .rs { margin: 9px 0 0; }
.g6 .stack { padding: 17px 9px 0 8px; }

.work { flex: 1; display: flex; min-height: 0; background: #d6e4f1; }
.left { width: 300px; flex: none; display: flex; flex-direction: column; }
.right { flex: 1; min-width: 0; display: flex; flex-direction: column; }
.treepane, .prodpane { flex: 1; min-height: 0; display: flex; flex-direction: column; background: #fff; }
.prodpane { background: none; }
.tools { display: flex; align-items: center; height: 27px; flex: none; background: #fff; position: relative; padding-bottom: 2px; }
.tools + .tools { height: 28px; padding-bottom: 0; }
.tools:first-child::after { content: ""; position: absolute; left: 2px; right: 2px; bottom: 0; height: 1px; background: #888; }
.tool { height: 22px; padding: 0 4px; gap: 4px; white-space: nowrap; }
.tool.wide { padding-right: 5px; }
.tool.drop { padding-right: 3px; }
.tool.on { background: #cce4f9; box-shadow: inset 0 0 0 1px #90c4f0; }
.tool:disabled { color: #a0a0a0; }
.tool:disabled .ico { filter: grayscale(1); opacity: .35; }
.tool .tri { margin-left: -2px; }
.tsep { width: 1px; height: 20px; margin: 0 2px; background: #888; }

.search { display: flex; align-items: center; height: 25px; flex: none; border: 1px solid #7a7a7a; border-bottom-width: 2px; margin-top: -1px; padding: 0 1px; gap: 2px; font-size: 11px; }
.search button { width: 20px; height: 20px; justify-content: center; background: #e1e1e1; border: 1px solid #adadad; }
.search input { flex: 1; min-width: 0; height: 18px; outline: 0; }
.search input::placeholder { color: #777; opacity: 1; }
.treewrap { flex: 1; min-height: 0; overflow: hidden; border: 1px solid #888; border-width: 0 1px; }
table { border-collapse: collapse; table-layout: fixed; width: 100%; font-size: 11px; }
th, td { padding: 0; font-weight: 400; text-align: left; white-space: nowrap; overflow: hidden; }
.cell { display: block; overflow: hidden; margin-right: 2px; }
.c46 { width: 46px; } .c20 { width: 20px; }
.tree th { height: 19px; padding-left: 2px; border-right: 1px solid #ddd; }
.tree td { height: 19px; }
.tree td + td { text-align: right; padding-right: 2px; }
.tree tbody tr:nth-child(odd) { background: #e9eef3; }
.tree tbody .root { outline: 1px dotted #000; outline-offset: -1px; }
.root td + td { background: #a5c3ea; color: #fff; }
.node { display: flex; align-items: center; gap: 2px; padding-left: 1px; }
.lv1 { padding-left: 5px; } .lv2 { padding-left: 24px; }
.box { width: 9px; height: 9px; border: 1px solid #999; background: linear-gradient(#345, #345) center / 5px 1px no-repeat, linear-gradient(#345, #345) center / 1px 5px no-repeat, #fff; }
.node .box { margin-right: 5px; }
.box.minus { background: linear-gradient(#345, #345) center / 5px 1px no-repeat, #fff; }
.box.none { visibility: hidden; }
.count { height: 23px; flex: none; background: #f0f0f0; border: 1px solid #8a8a8a; padding: 2px; font-size: 11px; }
.count span { display: block; width: 229px; height: 18px; border: 1px solid; border-color: #aaa #fff #fff #aaa; line-height: 17px; }

.hsplit { height: 9px; flex: none; display: flex; justify-content: center; align-items: center; }
.hsplit i { width: 30%; height: 7px; display: flex; justify-content: center; align-items: center; background: #f7fafd; border: 1px solid #8da1b5; border-radius: 2px; }
.vsplit { width: 8px; flex: none; display: flex; align-items: center; justify-content: center; }
.vsplit i { height: 30%; width: 7px; display: flex; align-items: center; justify-content: center; background: #f7fafd; border: 1px solid #8da1b5; border-radius: 2px; }
.hsplit path, .vsplit path { fill: none; stroke: #000; stroke-width: 2; }

.preview { position: relative; height: 300px; flex: none; display: flex; flex-direction: column; border: 1px solid #999; overflow: hidden; background: conic-gradient(#fff 25%, #c0c0c0 0 50%, #fff 0 75%, #c0c0c0 0) 0 0 / 16px 16px; }
.preview strong { font: bold 11px/15px "DejaVu Sans Condensed", sans-serif; padding: 7px 0 0 7px; white-space: nowrap; }
.dropzone { width: 160px; height: 150px; margin: 52px auto 0; background: #fff; display: flex; flex-direction: column; align-items: center; padding-top: 20px; gap: 8px; flex: none; }
.dropzone span { font: bold 15px/18px "Liberation Sans", sans-serif; color: #b4b4b4; white-space: nowrap; }
.zooms { display: flex; align-items: center; gap: 12px; margin-top: auto; padding: 0 8px 6px 6px; }
.zooms svg:first-child { margin-right: auto; }
.second { width: 146px; height: auto; border-right: 0; }
.second .dropzone { width: 100%; height: 136px; margin-top: 58px; padding-top: 20px; gap: 7px; }
.second .dropzone span { font-size: 14px; }
.second .zooms { padding-right: 36px; }
.meter { position: absolute; top: 23px; right: 16px; width: 120px; height: 120px; padding: 10px 7px 0; background: rgba(60, 60, 60, .62); border: 1px solid #444; display: flex; flex-wrap: wrap; justify-content: flex-end; align-content: flex-start; }
.meter b { width: 100%; height: 20px; display: flex; align-items: center; justify-content: flex-end; font: bold 17px/20px "Open Sans", sans-serif; }
.meter > svg + b { margin-top: 12px; }
.w { color: #fff; } .y { color: #ff2; gap: 14px; } .g { color: #4be43a; } .o { color: #f09a40; gap: 17px; }
.orb { position: absolute; right: -32px; bottom: 4px; }

.filter { display: flex; align-items: center; height: 27px; flex: none; padding-left: 6px; background: #fff; border-top: 1px solid #888; }
.combo { display: flex; width: 227px; margin: 0 6px 0 8px; }
.combo select { flex: 1; height: 20px; }
.combo i { width: 17px; height: 20px; display: grid; place-items: center; background: #e1e1e1; border: 1px solid #adadad; }
.combo path, .all path { fill: none; stroke: #444; }
.filter .tsep { margin: 0 9px 0 5px; }
.filter input { margin-left: 7px; }
input[type="checkbox"] { appearance: none; width: 13px; height: 13px; border: 1px solid #333; background: #fff; display: block; flex: none; }
input[type="checkbox"]:checked::after { content: ""; display: block; width: 4px; height: 8px; margin: 0 0 0 4px; border: solid #333; border-width: 0 1px 1px 0; transform: rotate(42deg); }
.pager { display: flex; align-items: center; height: 27px; flex: none; padding-left: 2px; font-size: 11px; }
.all { display: flex; align-items: center; width: 43px; height: 20px; margin: 0 3px 0 1px; padding-right: 4px; background: #e5e5e5; border: 1px solid #999; }
.all select { flex: 1; min-width: 0; padding-left: 2px; }
.pager .tsep { margin: 0 2px 0 5px; background: #9aa; }
.dim { color: #9aa3ad; }
.pager button { margin: 0 4px; }
.pager button path { fill: none; stroke: #8e969e; stroke-width: 3; }
.pager input { width: 37px; height: 20px; background: #fff; border: 1px solid #c5ced8; padding-left: 3px; color: #888; margin: 0 1px; }

.grid { flex: 1; min-height: 0; display: grid; grid-template: minmax(0, 1fr) 17px / minmax(0, 1fr) 17px; border: 1px solid #7f8b97; background: #f0f0f0; font-size: 11px; }
.gmain { display: flex; flex-direction: column; min-height: 0; }
.groupby { height: 36px; flex: none; line-height: 37px; padding-left: 7px; background: #e9eef3; }
.gscroll { flex: 1; min-height: 0; overflow: hidden; background: #fff; border-bottom: 2px solid #999; }
.k0 { width: 11px; } .k1 { width: 64px; } .k2 { width: 60px; } .k4 { width: 127px; } .k5 { width: 180px; } .k6 { width: 79px; } .k7 { width: 141px; } .k8 { width: 153px; } .k9 { width: 48px; }
.products th, .imggrid th { height: 19px; padding-left: 2px; border-right: 1px solid #ddd; }
.products th .ico, .imggrid th .ico { display: inline-block; vertical-align: -4px; width: 15px; margin: 0 2px 0 1px; }
.sort { display: inline-block; width: 42px; overflow: hidden; vertical-align: bottom; }
th b { font: 9px "DejaVu Sans", sans-serif; color: #777; margin-left: 4px; }
.products td { height: 27px; padding-left: 1px; border-right: 1px solid #999; }
.products td:first-child { background: #f0f0f0; border-bottom: 1px solid #999; padding-left: 3px; }
.products td:nth-child(2) { text-align: right; padding-right: 2px; }
.products td input, .products td:nth-child(3) svg { margin: 0 auto; }
.products tbody tr:nth-child(odd) { background: #e9eef3; }
.products .cur td:not(:first-child) { background: #a5c3ea; font: bold 11px "DejaVu Sans Condensed", sans-serif; border-top: 1px dotted #000; border-bottom: 1px dotted #000; }
.products .cur td:nth-child(6) { background: #e9eef3 !important; font: inherit !important; }
.gfoot { height: 22px; flex: none; display: flex; padding: 2px 0; }
.gfoot i { width: 327px; }
.gfoot span { width: 178px; border: 1px solid #ccc; background: #e8e8e8; padding-left: 3px; line-height: 17px; }
.vbar, .hbar { display: flex; align-items: center; background: #f0f0f0; }
.vbar { flex-direction: column; padding: 6px 0; }
.vbar i, .hbar i { background: #cdcdcd; }
.vbar path, .hbar path { fill: none; stroke: #444; stroke-width: 2; }
.grid .vbar i { width: 15px; height: 16px; margin: auto 0 54px; }
.hbar { padding: 0 6px; border-top: 1px solid #bbb; }
.hbar i { width: 46%; height: 15px; margin: 0 auto 0 6px; }

.lower { display: flex; height: 300px; flex: none; }
.props { width: 220px; flex: none; display: flex; border: 1px solid #7f8b97; background: #fff; font-size: 11px; }
.props ul { list-style: none; margin: 0; padding: 1px 0 0; flex: 1; overflow: hidden; }
.props li { display: flex; align-items: center; height: 19px; padding-left: 20px; white-space: nowrap; }
.props li:nth-child(odd) { background: #e9eef3; }
.props li span { padding-left: 3px; line-height: 19px; flex: 1; }
.props li.sub { padding-left: 39px; }
.props li.sel span { background: #a5c3ea; }
.props li .box { margin: 0 6px 0 -15px; }
.props .vbar { width: 17px; }
.props .vbar i { width: 15px; height: 198px; margin: 5px 0 auto; }
.images { flex: 1; min-width: 0; display: flex; flex-direction: column; background: #fff; }
.images .tools + .tools { height: 27px; }
.imggrid { flex: 1; display: flex; flex-direction: column; border: 1px solid #7f8b97; }
.imggrid p { margin: auto; padding-bottom: 1px; font-size: 11px; color: #666; }
.m1 { width: 57px; } .m2 { width: 62px; } .m4 { width: 44px; } .m5 { width: 53px; }
.imggrid .sort { width: 32px; }

.status { display: flex; height: 23px; flex: none; border-top: 1px solid #8aa3c0; background: linear-gradient(#dce7f4, #b1c4da); font-size: 11px; line-height: 22px; white-space: nowrap; }
.status span { padding-left: 2px; border-right: 1px solid #9db1c9; overflow: hidden; }
.status span:nth-child(1) { width: 499px; color: #2f4468; }
.status span:nth-child(2) { width: 175px; }
.status span:nth-child(3) { flex: 1; }
.status span:nth-child(4) { width: 200px; color: #e30b17; font: bold 11px/22px "DejaVu Sans Condensed", sans-serif; }
.status span:nth-child(5) { width: 153px; color: #14812c; }

.taskbar { display: flex; align-items: center; height: 30px; flex: none; background: #020408; color: #fff; padding-left: 10px; }
.tv { margin: 0 16px 0 18px; }
.grip { width: 4px; height: 14px; border: 1px solid #444; border-width: 0 1px; }
.pin { width: 23px; justify-content: center; }
.grip + .pin { margin-left: 7px; }
.far { margin: 0 18px; }
.open { width: 28px; height: 30px; justify-content: center; border-bottom: 2px solid #76b9ed; border-top: 2px solid transparent; }
.open.cur { width: 36px; margin-left: 5px; background: #34373c; }
.tray { margin-left: auto; display: flex; align-items: center; gap: 8px; padding-right: 25px; }
.tray time + svg { margin-left: 9px; }
</style>
